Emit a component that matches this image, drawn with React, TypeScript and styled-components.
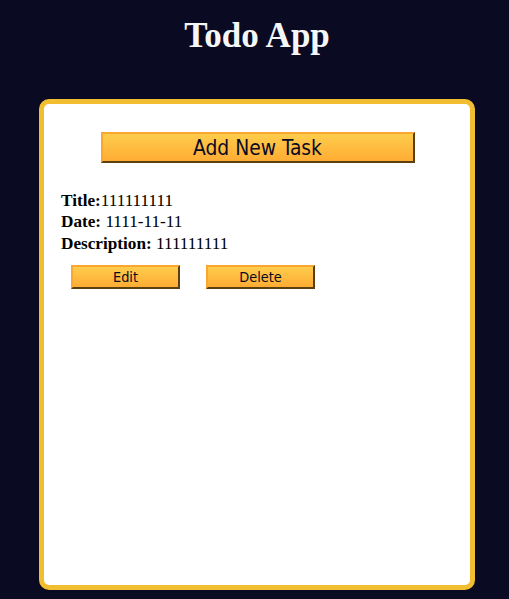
import React from "react";
import styled, { createGlobalStyle } from "styled-components";

const Global = createGlobalStyle`
  html, body { margin: 0; padding: 0; }
  body {
    background-color: #0a0a23;
    font-family: "Liberation Serif", "Times New Roman", serif;
    height: 599px;
    overflow: hidden;
  }
`;

const Main = styled.main`
  display: flex;
  flex-direction: column;
  align-items: center;
  padding-left: 5px;
`;

const Heading = styled.h1`
  margin: 14px 0 0 0;
  height: 85px;
  color: #f5f6f7;
  font-family: "Liberation Serif", "Times New Roman", serif;
  font-weight: bold;
  font-size: 35px;
  line-height: 44px;
  text-align: center;
`;

const Card = styled.div`
  box-sizing: border-box;
  width: 436px;
  height: 491px;
  background: #ffffff;
  border: 5px solid #f1be32;
  border-radius: 10px;
  padding: 28px 16px 16px 17px;
  display: flex;
  flex-direction: column;
`;

const Button = styled.button<{ $large?: boolean }>`
  box-sizing: border-box;
  cursor: pointer;
  color: #0a0a23;
  background-color: #feac32;
  background-image: linear-gradient(#fecc4c, #ffac33);
  border: 2px outset #feac32;
  border-top-color: #f9a730;
  border-left-color: #f9a730;
  border-right-color: #b07a22;
  border-bottom-color: #b07a22;
  font-family: "DejaVu Sans Condensed", "DejaVu Sans", sans-serif;
  padding: 0;
  width: ${(p) => (p.$large ? "314px" : "109px")};
  height: ${(p) => (p.$large ? "31px" : "24px")};
  font-size: ${(p) => (p.$large ? "20.8px" : "14.4px")};
  align-self: ${(p) => (p.$large ? "center" : "auto")};
`;

const Task = styled.div`
  margin-top: 27px;
  font-size: 17.2px;
  line-height: 21.3px;
  color: #000;
`;

const Line = styled.div``;

const Label = styled.strong`
  font-weight: bold;
`;

const Actions = styled.div`
  display: flex;
  gap: 26px;
  padding-left: 10px;
  margin-top: 11px;
`;

export default function App() {
  return (
    <>
      <Global />
      <Main>
        <Heading>Todo App</Heading>
        <Card>
          <Button $large>Add New Task</Button>
          <Task>
            <Line>
              <Label>Title:</Label>111111111
            </Line>
            <Line>
              <Label>Date:</Label> 1111-11-11
            </Line>
            <Line>
              <Label>Description:</Label> 111111111
            </Line>
          </Task>
          <Actions>
            <Button>Edit</Button>
            <Button>Delete</Button>
          </Actions>
        </Card>
      </Main>
    </>
  );
}
